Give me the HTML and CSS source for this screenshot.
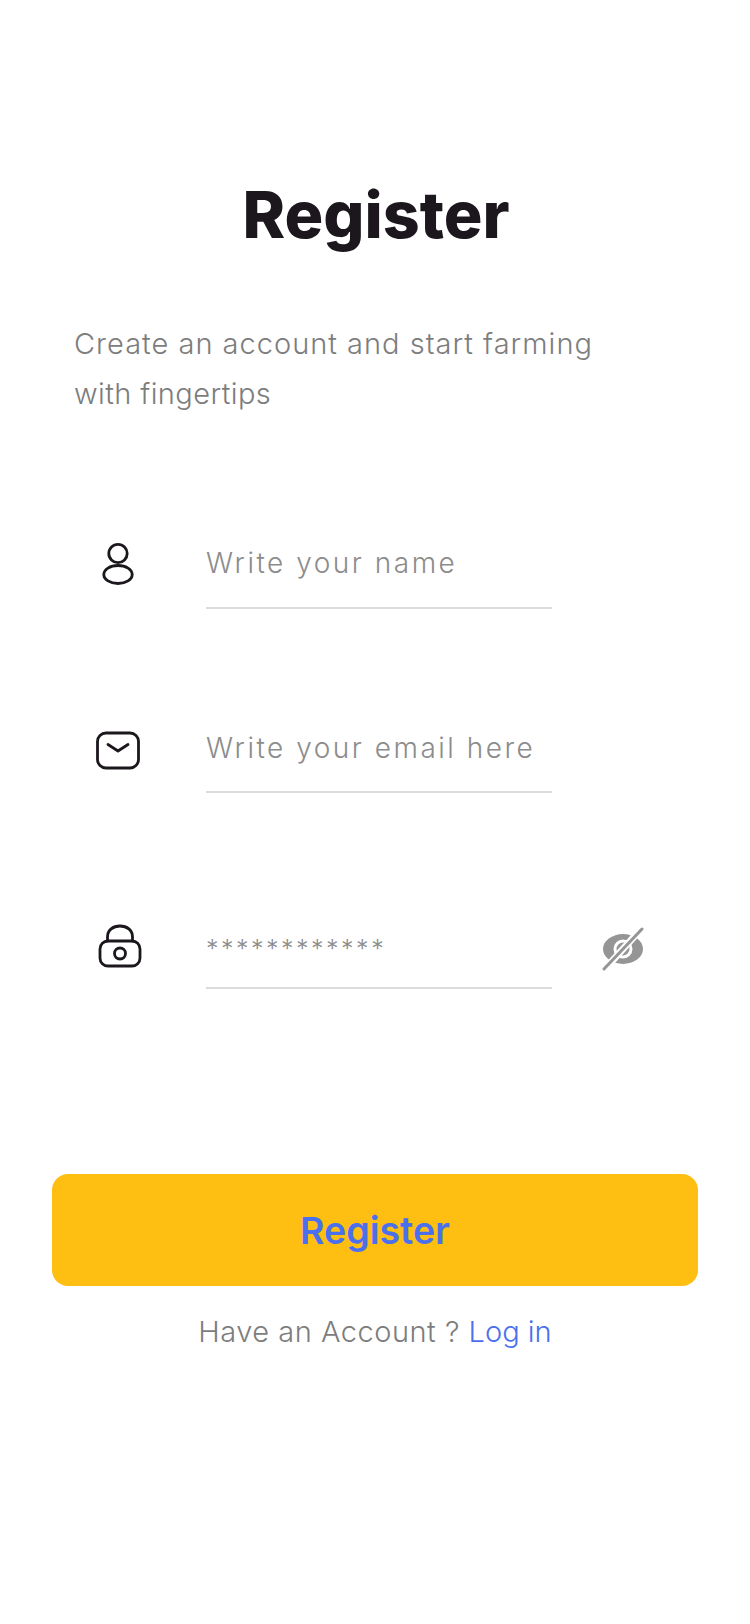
FILE: index.html
```html
<!DOCTYPE html>
<html lang="en">
<head>
  <meta charset="UTF-8" />
  <meta name="viewport" content="width=device-width, initial-scale=1.0"/>
  <title>Register</title>
  <link rel="stylesheet" href="styles.css">
</head>
<body>

  <main class="page">
    <h1 class="title">Register</h1>
    <p class="intro">Create an account and start farming<br><span class="intro-end">with fingertips</span></p>

    <div class="form">
      <div class="field field-name">
        <span class="field-icon">
          <svg width="48" height="48" viewBox="0 0 48 48" fill="none" stroke="#1b171c" stroke-width="2.8">
            <circle cx="24" cy="13.5" r="9.2"/>
            <ellipse cx="24" cy="34.5" rx="14.2" ry="9"/>
          </svg>
        </span>
        <div class="field-input">Write your name</div>
      </div>

      <div class="field field-email">
        <span class="field-icon">
          <svg width="48" height="48" viewBox="0 0 48 48" fill="none" stroke="#1b171c" stroke-width="2.8" stroke-linecap="round" stroke-linejoin="round">
            <rect x="3.5" y="6" width="41" height="35" rx="8.5"/>
            <path d="M14 17.5 L24 24 L34 17.5"/>
          </svg>
        </span>
        <div class="field-input">Write your email here</div>
      </div>

      <div class="field field-password">
        <span class="field-icon">
          <svg width="48" height="48" viewBox="0 0 48 48" fill="none" stroke="#1b171c" stroke-width="2.8" stroke-linecap="round">
            <rect x="5" y="18" width="40" height="25" rx="8"/>
            <path d="M12.5 18 V14 C12.5 7 18 3 25 3 C32 3 37.5 7 37.5 14 V18"/>
            <circle cx="25" cy="30.5" r="5.5"/>
          </svg>
        </span>
        <div class="field-input field-stars">************</div>
        <button class="eye" type="button" aria-label="Show password">
          <svg width="44" height="44" viewBox="0 0 44 44">
            <ellipse cx="22" cy="22" rx="20" ry="15" fill="#959595"/>
            <circle cx="22" cy="22" r="8" fill="none" stroke="#fff" stroke-width="3"/>
            <path d="M41 1 L3 43" stroke="#fff" stroke-width="7"/>
            <path d="M41 2 L3 42" stroke="#959595" stroke-width="3" stroke-linecap="round"/>
          </svg>
        </button>
      </div>
    </div>

    <button class="submit" type="button">Register</button>
    <p class="login">Have an Account ? <a href="#">Log in</a></p>
  </main>

</body>
</html>
```

FILE: styles.css
```css
* {
  box-sizing: border-box;
}

body {
  margin: 0;
  background: #fff;
  font-family: 'Inter', sans-serif;
}

.page {
  display: flex;
  flex-direction: column;
  min-height: 1624px;
  padding: 176px 52px 0;
}

.title {
  margin: 0;
  padding-left: 2px;
  font-size: 64.5px;
  font-weight: 800;
  line-height: 78px;
  text-align: center;
  color: #1b171c;
}

.intro {
  margin: 65px 0 0 22px;
  font-size: 29px;
  font-weight: 300;
  line-height: 50px;
  letter-spacing: 1px;
  color: #7d7d7d;
}

.intro-end {
  letter-spacing: 0.4px;
}

.form {
  margin-top: 102px;
}

.field {
  display: flex;
  align-items: flex-start;
  height: 88px;
  padding-left: 42px;
}

.field-email {
  margin-top: 96px;
}

.field-password {
  margin-top: 108px;
}

.field-icon {
  flex: 0 0 112px;
  height: 48px;
  margin-top: 19px;
  display: flex;
}

.field-email .field-icon,
.field-password .field-icon {
  margin-top: 22px;
}

.field-password .field-icon svg {
  margin-left: 1px;
}

.field-input {
  width: 346px;
  height: 88px;
  padding-top: 22px;
  border-bottom: 2px solid #dcdcdc;
  font-size: 28px;
  font-weight: 300;
  line-height: 40px;
  letter-spacing: 2.5px;
  color: #8c8c8c;
}

.field-email .field-input {
  padding-top: 23px;
}

.field-stars {
  padding-top: 28px;
  font-size: 25px;
  letter-spacing: 2.5px;
}

.eye {
  margin: 26px 0 0 49px;
  padding: 0;
  border: none;
  background: none;
  height: 44px;
}

.submit {
  height: 112px;
  margin-top: 185px;
  border: none;
  border-radius: 16px;
  background: #ffbe12;
  color: #4a70ee;
  font-family: 'Inter', sans-serif;
  font-size: 37.5px;
  font-weight: 600;
  cursor: pointer;
}

.login {
  margin: 26px 0 0;
  font-size: 29px;
  font-weight: 300;
  line-height: 40px;
  letter-spacing: 0.5px;
  text-align: center;
  color: #7d7d7d;
}

.login a {
  letter-spacing: 0;
  color: #4a70ee;
  text-decoration: none;
}
```
